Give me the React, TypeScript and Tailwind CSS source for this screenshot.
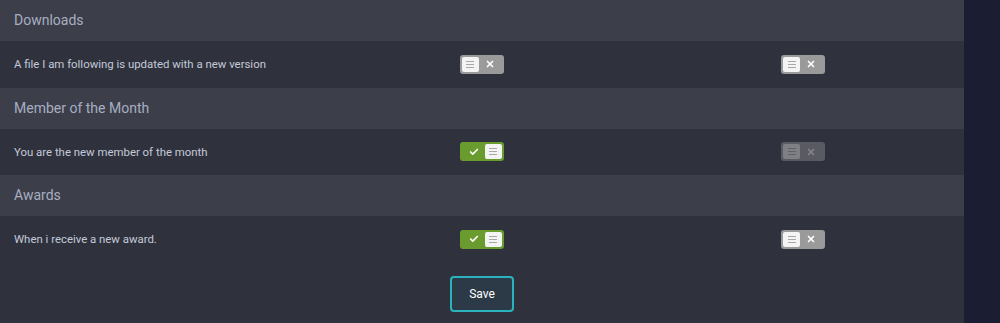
import { Check, X } from 'lucide-react'

type ToggleState = 'on' | 'off' | 'disabled'

interface Row {
  readonly label: string
  readonly a: ToggleState
  readonly b: ToggleState
}

interface Section {
  readonly title: string
  readonly rows: readonly Row[]
}

const sections: readonly Section[] = [
  {
    title: 'Downloads',
    rows: [{ label: 'A file I am following is updated with a new version', a: 'off', b: 'off' }],
  },
  {
    title: 'Member of the Month',
    rows: [{ label: 'You are the new member of the month', a: 'on', b: 'disabled' }],
  },
  {
    title: 'Awards',
    rows: [{ label: 'When i receive a new award.', a: 'on', b: 'off' }],
  },
]

function Knob() {
  return (
    <span className="flex h-[15px] w-[17px] flex-col items-center justify-center gap-[2px] rounded-[2px] bg-[#f4f4f4]">
      <span className="h-px w-[8px] bg-[#a8a8a8]" />
      <span className="h-px w-[8px] bg-[#a8a8a8]" />
      <span className="h-px w-[8px] bg-[#a8a8a8]" />
    </span>
  )
}

function Toggle({ state }: { readonly state: ToggleState }) {
  if (state === 'on') {
    return (
      <span className="flex h-[19px] w-[44px] items-center justify-between rounded-[3px] bg-[#6a9b2f] pl-[9px] pr-[2px]">
        <Check size={10} strokeWidth={4} className="text-white" />
        <Knob />
      </span>
    )
  }
  return (
    <span
      className={
        state === 'disabled'
          ? 'flex h-[19px] w-[44px] items-center justify-between rounded-[3px] bg-[#9a9a9a] pl-[2px] pr-[9px] opacity-40'
          : 'flex h-[19px] w-[44px] items-center justify-between rounded-[3px] bg-[#9a9a9a] pl-[2px] pr-[9px]'
      }
    >
      <Knob />
      <X size={10} strokeWidth={4} className="text-white" />
    </span>
  )
}

export default function App() {
  return (
    <div className="flex h-[323px] w-[1000px] bg-[#1b1e33] font-['Roboto',sans-serif]">
      <div className="flex w-[964px] flex-col bg-[#2f323d]">
        {sections.map((section) => (
          <div key={section.title}>
            <div className="flex h-[41px] items-center bg-[#3c3e4a] px-[14px] text-[14px] text-[#a7aec1]">
              {section.title}
            </div>
            {section.rows.map((row) => (
              <div key={row.label} className="grid h-[46.5px] grid-cols-3 items-center">
                <span className="pl-[14px] pt-px text-[11.4px] text-[#c4c9d9]">{row.label}</span>
                <span className="flex justify-center">
                  <Toggle state={row.a} />
                </span>
                <span className="flex justify-center">
                  <Toggle state={row.b} />
                </span>
              </div>
            ))}
          </div>
        ))}
        <div className="flex flex-1 items-start justify-center pt-[13px]">
          <button
            type="button"
            className="h-[36px] w-[64px] rounded-[4px] border-2 border-[#2ab3be] bg-[#2b3a46] text-[12px] text-white"
          >
            Save
          </button>
        </div>
      </div>
    </div>
  )
}
